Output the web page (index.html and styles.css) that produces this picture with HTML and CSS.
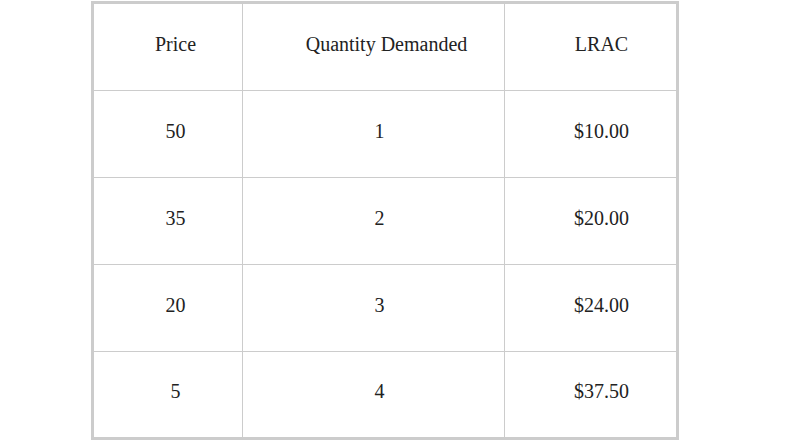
FILE: index.html
```html
<!DOCTYPE html>
<html>
<head>
<meta charset="utf-8">
<link rel="stylesheet" href="styles.css">
</head>
<body>
<table class="data">
  <tr><td class="c1">Price</td><td class="c2 head-q">Quantity Demanded</td><td class="c3">LRAC</td></tr>
  <tr><td class="c1">50</td><td class="c2">1</td><td class="c3">$10.00</td></tr>
  <tr><td class="c1">35</td><td class="c2">2</td><td class="c3">$20.00</td></tr>
  <tr><td class="c1">20</td><td class="c2">3</td><td class="c3">$24.00</td></tr>
  <tr class="last"><td class="c1">5</td><td class="c2">4</td><td class="c3">$37.50</td></tr>
</table>
</body>
</html>
```
FILE: styles.css
```css
html, body {
  margin: 0;
  padding: 0;
  background: #fff;
}
body {
  padding: 1px 0 0 91px;
}
.data {
  border-collapse: separate;
  border-spacing: 0;
  border: 3px solid #cccccc;
  font-family: "Liberation Serif", "Times New Roman", serif;
  font-size: 20px;
  color: #222;
}
.data td {
  box-sizing: border-box;
  height: 87px;
  padding: 0 0 6px 0;
  text-align: center;
  vertical-align: middle;
  border-right: 1px solid #cccccc;
  border-bottom: 1px solid #cccccc;
}
.data td.c1 { width: 149px; padding-left: 15px; }
.data td.c2 { width: 262px; padding-left: 12px; }
.data td.c2.head-q { padding-left: 26px; }
.data td.c3 { width: 171px; padding-left: 22px; border-right: none; }
.data tr.last td { border-bottom: none; height: 85px; }
```
